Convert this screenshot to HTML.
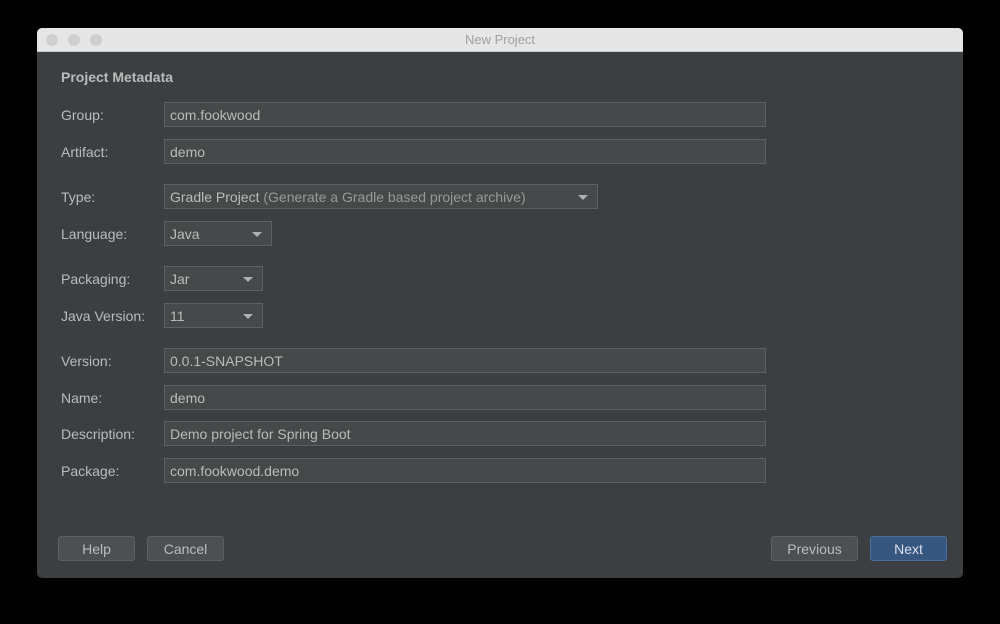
<!DOCTYPE html>
<html><head><style>
body{margin:0;width:1000px;height:624px;background:#000;font-family:"Liberation Sans",sans-serif;position:relative;overflow:hidden}
.win{position:absolute;left:37px;top:28px;width:926px;height:550px;background:#3c3f41;border-radius:5px;overflow:hidden}
.tb{position:absolute;left:0;top:0;width:926px;height:23px;background:#e6e6e6;border-bottom:1px solid #c8c8c8;text-align:center;font-size:13px;line-height:24px;color:#a0a0a0}
.dot{position:absolute;top:6px;width:12px;height:12px;border-radius:50%;background:#cfcfcf}
.lbl{position:absolute;left:24px;font-size:14px;color:#bbbbbb;margin-top:-1px}
.f{position:absolute;left:127px;height:23px;background:#45494a;border:1px solid #5e6163;font-size:14px;color:#bbbbbb;line-height:25px;padding-left:5px;box-sizing:content-box}
.arr{position:absolute;right:9px;top:10px;width:0;height:0;border-left:5px solid transparent;border-right:5px solid transparent;border-top:5px solid #aeb0b2}
.btn{position:absolute;top:508px;height:23px;border:1px solid #5e6163;background:#4c5052;border-radius:3px;color:#bbbbbb;font-size:14px;text-align:center;line-height:24px}
</style></head><body>
<div class="win">
<div class="tb">New Project</div>
<div class="dot" style="left:9px"></div><div class="dot" style="left:31px"></div><div class="dot" style="left:53px"></div>
<div class="lbl" style="top:42px;font-weight:bold">Project Metadata</div>
<div class="lbl" style="top:80px">Group:</div><div class="f" style="top:74px;width:595px">com.fookwood</div>
<div class="lbl" style="top:117px">Artifact:</div><div class="f" style="top:111px;width:595px">demo</div>
<div class="lbl" style="top:162px">Type:</div><div class="f" style="top:156px;width:427px">Gradle Project <span style="color:#999">(Generate a Gradle based project archive)</span><div class="arr"></div></div>
<div class="lbl" style="top:199px">Language:</div><div class="f" style="top:193px;width:101px">Java<div class="arr"></div></div>
<div class="lbl" style="top:244px">Packaging:</div><div class="f" style="top:238px;width:92px">Jar<div class="arr"></div></div>
<div class="lbl" style="top:281px">Java Version:</div><div class="f" style="top:275px;width:92px">11<div class="arr"></div></div>
<div class="lbl" style="top:326px">Version:</div><div class="f" style="top:320px;width:595px">0.0.1-SNAPSHOT</div>
<div class="lbl" style="top:363px">Name:</div><div class="f" style="top:357px;width:595px">demo</div>
<div class="lbl" style="top:399px">Description:</div><div class="f" style="top:393px;width:595px">Demo project for Spring Boot</div>
<div class="lbl" style="top:436px">Package:</div><div class="f" style="top:430px;width:595px">com.fookwood.demo</div>
<div class="btn" style="left:21px;width:75px">Help</div>
<div class="btn" style="left:110px;width:75px">Cancel</div>
<div class="btn" style="left:734px;width:85px">Previous</div>
<div class="btn" style="left:833px;width:75px;background:#365880;border-color:#4a6f9a;color:#dde">Next</div>
</div>
</body></html>
